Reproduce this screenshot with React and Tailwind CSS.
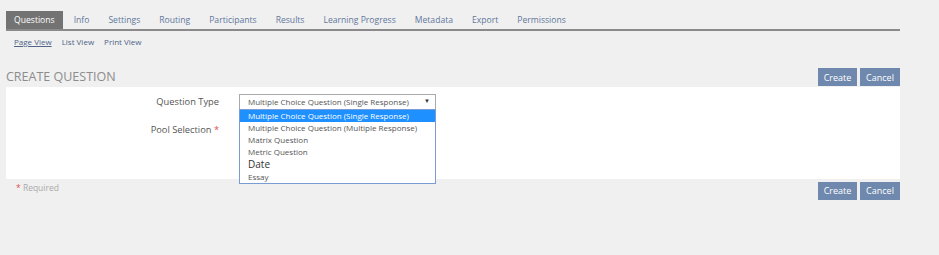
const tabs = [
  "Questions",
  "Info",
  "Settings",
  "Routing",
  "Participants",
  "Results",
  "Learning Progress",
  "Metadata",
  "Export",
  "Permissions",
];

const options = [
  { label: "Multiple Choice Question (Single Response)", selected: true },
  { label: "Multiple Choice Question (Multiple Response)" },
  { label: "Matrix Question" },
  { label: "Metric Question" },
  { label: "Date", big: true },
  { label: "Essay" },
];

function Buttons() {
  return (
    <div className="flex gap-[3px]">
      <button className="h-[18px] w-[39px] bg-[#6f88ad] text-[9px] text-white">
        Create
      </button>
      <button className="h-[18px] w-[40px] bg-[#6f88ad] text-[9px] text-white">
        Cancel
      </button>
    </div>
  );
}

export default function App() {
  return (
    <div
      className="h-[255px] w-[939px] bg-[#f0f0f0] text-[#555]"
      style={{ fontFamily: '"Open Sans", sans-serif' }}
    >
      <div className="pl-[6px] pt-[11px]">
        <div className="flex w-[894px] gap-[3px] border-b-2 border-[#8a8a8a]">
          {tabs.map((tab, i) => (
            <div
              key={tab}
              className={[
                "flex h-[18px] items-center px-[8px] pt-[1px] text-[8.6px]",
                i === 0 ? "bg-[#737373] text-white" : "text-[#60779b]",
              ].join(" ")}
            >
              {tab}
            </div>
          ))}
        </div>

        <div className="mt-[5px] flex gap-[10px] pl-[8px] text-[8px] text-[#4f6486]">
          <span className="underline">Page View</span>
          <span>List View</span>
          <span>Print View</span>
        </div>

        <div className="mt-[20px] flex w-[894px] items-center justify-between">
          <h1 className="text-[12.5px] uppercase text-[#8c8c8c]">
            Create Question
          </h1>
          <Buttons />
        </div>

        <div className="relative h-[92px] w-[894px] bg-white">
          <div className="flex items-center pt-[7px]">
            <div className="w-[213px] text-right text-[9.3px]">
              Question Type
            </div>
            <div className="relative ml-[20px]">
              <div className="flex h-[16px] w-[197px] items-center justify-between border border-[#a9a9a9] bg-white pl-[8px] pr-[5px] text-[8px]">
                <span>Multiple Choice Question (Single Response)</span>
                <span className="text-[6px] text-[#333]">▼</span>
              </div>
              <div className="absolute left-0 top-[15px] z-10 w-[197px] border border-[#7a9cd3] bg-white text-[8px] text-[#555]">
                {options.map((o) => (
                  <div
                    key={o.label}
                    className={[
                      "flex h-[12px] items-center pl-[8px]",
                      o.selected ? "bg-[#1e90ff] text-white" : "",
                      o.big ? "h-[13px] text-[10px] text-[#333]" : "",
                    ].join(" ")}
                  >
                    {o.label}
                  </div>
                ))}
              </div>
            </div>
          </div>
          <div className="flex items-center pt-[13px]">
            <div className="w-[213px] text-right text-[9.3px]">
              Pool Selection <span className="text-[#e05050]">*</span>
            </div>
          </div>
        </div>

        <div className="flex w-[894px] items-start justify-between pt-[3px]">
          <div className="pl-[10px] text-[8.5px] text-[#aaa]">
            <span className="text-[#e05050]">*</span> Required
          </div>
          <Buttons />
        </div>
      </div>
    </div>
  );
}
